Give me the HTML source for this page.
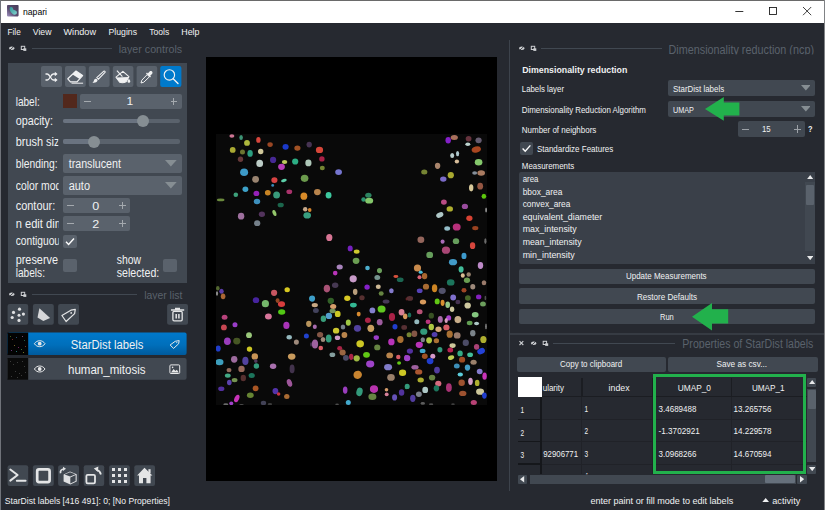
<!DOCTYPE html>
<html><head><meta charset="utf-8"><title>napari</title>
<style>
*{box-sizing:border-box;margin:0;padding:0}
html,body{width:825px;height:510px;overflow:hidden;background:#262930}
body{position:relative;font-family:"Liberation Sans",sans-serif;color:#f0f1f2;font-size:12px}
.a{position:absolute}
.t{position:absolute;white-space:nowrap;transform-origin:0 50%;display:block}
</style></head><body>
<div class="a" style="left:0px;top:0px;width:825px;height:23px;background:#ffffff;"></div>
<div class="a" style="left:0px;top:0px;width:825px;height:1px;background:#6a6a6a;"></div>
<div class="a" style="left:0px;top:0px;width:1px;height:510px;background:#70737a;"></div>
<svg class="a" style="left:7px;top:5.2px" width="11.6" height="11.4" viewBox="0 0 11.6 11.4"><defs><linearGradient id="icg" x1="1" y1="0" x2="0" y2="1"><stop offset="0" stop-color="#463b58"/><stop offset="0.6" stop-color="#5a4d70"/><stop offset="1" stop-color="#a294c4"/></linearGradient><linearGradient id="icb" x1="0" y1="0" x2="1" y2="1"><stop offset="0" stop-color="#2f9696"/><stop offset="1" stop-color="#86d2d0"/></linearGradient></defs><rect width="11.600" height="11.400" rx="0.800" fill="url(#icg)"/><path d="M3.700 2.100c1.300-.3 2.200.6 2.300 1.700.1 1 .9 1.300 1.900 1.500 1.400.3 2.300 1.500 2 2.800-.4 1.500-2.100 2-3.500 1.300C5 8.700 4.200 7.600 3.300 6.200 2.300 4.700 2.300 2.500 3.700 2.100z" fill="url(#icb)"/></svg>
<svg class="a" style="left:730px;top:0px" width="95" height="23" viewBox="0 0 95 23"><g stroke="#111" stroke-width="0.850" fill="none"><path d="M5.300 11.500h8"/><rect x="39.500" y="7.500" width="7" height="7"/><path d="M73 7l8.200 8.200M81.200 7l-8.200 8.200" stroke-width="0.800"/></g></svg>
<svg class="a" style="left:8.9px;top:45px" width="18" height="7" viewBox="0 0 18 7"><ellipse cx="2.8" cy="3.300" rx="2.800" ry="1.700" fill="#cdcfd2"/><path d="M0.6 5.300l4.400-4" stroke="#262930" stroke-width="0.800"/><rect x="12.3" y="1.300" width="3.400" height="3.200" fill="none" stroke="#cdcfd2" stroke-width="1"/><rect x="14.3" y="3.300" width="3" height="2.600" fill="#cdcfd2"/></svg>
<div class="a" style="left:31.5px;top:48px;width:80px;height:1px;background:#414851;"></div>
<div class="a" style="left:8px;top:63px;width:179px;height:219.5px;background:#414851;"></div>
<svg class="a" style="left:38px;top:62px" width="148" height="29" viewBox="38 62 148 29">
<g fill="#5a626c"><rect x="41" y="66" width="21" height="21" rx="2"/><rect x="65" y="66" width="20.800" height="21" rx="2"/><rect x="88.800" y="66" width="20.800" height="21" rx="2"/><rect x="112.800" y="66" width="20.600" height="21" rx="2"/><rect x="136.600" y="66" width="20.600" height="21" rx="2"/></g>
<rect x="160.200" y="66" width="21.200" height="21" rx="2" fill="#007acc"/>
<!-- shuffle -->
<g stroke="#f0f1f2" stroke-width="1.300" fill="none"><path d="M45.500 74h1.800c2.600 0 3.400 6 6 6h2"/><path d="M45.500 80h1.800c2.600 0 3.400-6 6-6h2"/></g>
<path d="M54.800 71.800l2.800 2.200-2.800 2.200zM54.800 77.800l2.800 2.200-2.800 2.200z" fill="#f0f1f2"/>
<!-- eraser -->
<path d="M67.800 78.800l8.200-7.800 6.600 4.600-5.600 6.200h-6.600z" fill="none" stroke="#f0f1f2" stroke-width="1.200" stroke-linejoin="round"/>
<path d="M76 71l6.600 4.600-3 3.400-7-4.600z" fill="#f0f1f2"/>
<path d="M71.500 83.200h11.600" stroke="#f0f1f2" stroke-width="1"/>
<!-- brush -->
<path d="M96.800 77.600l7-6.400c.8-.6 1.800.4 1.200 1.200l-6.600 6.800z" fill="none" stroke="#f0f1f2" stroke-width="1.100"/>
<path d="M92.400 83c1.200-.6 1.200-2 1.800-3.200.8-1.400 2.600-1.200 3.200 0 .6 1.400-.6 3-5 3.200z" fill="#f0f1f2"/>
<!-- bucket -->
<path d="M116 77.200L122.900 71.300L128.900 76.700L126.100 81.800Q123 83.300 119.700 82.300z" fill="none" stroke="#f0f1f2" stroke-width="1.100" stroke-linejoin="round"/>
<path d="M116 77.600L128.900 76.900L126.100 81.800Q123 83.300 119.700 82.300z" fill="#f0f1f2"/>
<path d="M116.900 70.700L122.400 76.700" stroke="#f0f1f2" stroke-width="1.100" fill="none"/>
<path d="M128.900 78.800c.8 1.200 1.400 1.900 1.400 2.600a1.400 1.400 0 0 1-2.800 0c0-.7.600-1.400 1.400-2.600z" fill="#f0f1f2"/>
<!-- dropper -->
<path d="M141 83l.8-2.800 5.400-5.600 2.200 2.200-5.600 5.400z" fill="none" stroke="#f0f1f2" stroke-width="1" stroke-linejoin="round"/>
<path d="M146 73.600l1-1 .8.800 1.800-1.800c1.600-1.600 4 .8 2.400 2.400l-1.800 1.800.8.800-1 1z" fill="#f0f1f2"/>
<!-- magnifier -->
<circle cx="169.400" cy="74.900" r="5.200" fill="none" stroke="#f0f1f2" stroke-width="1.150"/>
<path d="M173.200 78.800l4.800 4.800" stroke="#f0f1f2" stroke-width="1.400" stroke-linecap="round"/>
</svg>

<div class="a" style="left:62.7px;top:94px;width:14.3px;height:14.3px;background:#52281c;"></div>
<div class="a" style="left:80px;top:94px;width:101.5px;height:14.5px;background:#5a626c;border-radius:2px;"></div>
<div class="a" style="left:84px;top:100.75px;width:6.5px;height:1px;background:#a4a9ae;"></div>
<div class="a" style="left:170.5px;top:100.75px;width:6.5px;height:1px;background:#a4a9ae;"></div>
<div class="a" style="left:173.25px;top:97.75px;width:1px;height:7px;background:#a4a9ae;"></div>
<div class="a" style="left:63.3px;top:118.5px;width:117.1px;height:4.4px;background:#5a626c;border-radius:2px;"></div>
<div class="a" style="left:63.3px;top:118.5px;width:79.9px;height:4.4px;background:#6a7380;border-radius:2px;"></div>
<div class="a" style="left:137.2px;top:114.7px;width:12px;height:12px;background:#868e93;border-radius:6px;"></div>
<div class="a" style="left:63.3px;top:139.3px;width:117.1px;height:4.4px;background:#5a626c;border-radius:2px;"></div>
<div class="a" style="left:63.3px;top:139.3px;width:30.7px;height:4.4px;background:#6a7380;border-radius:2px;"></div>
<div class="a" style="left:88px;top:135.5px;width:12px;height:12px;background:#868e93;border-radius:6px;"></div>
<div class="a" style="left:63px;top:153.7px;width:118.5px;height:19.3px;background:#5a626c;border-radius:2px;"></div>
<svg class="a" style="left:165.45px;top:160.15px" width="11.7" height="6.4" viewBox="0 0 11.7 6.4"><path d="M0 0h11.7 l-5.85 6.4 z" fill="#868e93"/></svg>
<div class="a" style="left:63px;top:176.3px;width:118.5px;height:18.7px;background:#5a626c;border-radius:2px;"></div>
<svg class="a" style="left:165.45px;top:182.45px" width="11.7" height="6.4" viewBox="0 0 11.7 6.4"><path d="M0 0h11.7 l-5.85 6.4 z" fill="#868e93"/></svg>
<div class="a" style="left:63px;top:198.4px;width:67px;height:14.3px;background:#5a626c;border-radius:2px;"></div>
<div class="a" style="left:67px;top:205.05px;width:6.5px;height:1px;background:#a4a9ae;"></div>
<div class="a" style="left:119px;top:205.05px;width:6.5px;height:1px;background:#a4a9ae;"></div>
<div class="a" style="left:121.75px;top:202.05px;width:1px;height:7px;background:#a4a9ae;"></div>
<div class="a" style="left:63px;top:216.3px;width:67px;height:14.4px;background:#5a626c;border-radius:2px;"></div>
<div class="a" style="left:67px;top:223px;width:6.5px;height:1px;background:#a4a9ae;"></div>
<div class="a" style="left:119px;top:223px;width:6.5px;height:1px;background:#a4a9ae;"></div>
<div class="a" style="left:121.75px;top:220px;width:1px;height:7px;background:#a4a9ae;"></div>
<div class="a" style="left:63.3px;top:235px;width:13.7px;height:13.3px;background:#5a626c;border-radius:2px;"><svg width="14" height="13" viewBox="0 0 14 13" style="position:absolute;left:0;top:0"><path d="M3 6.800l2.600 2.600 5.400-5.800" stroke="#fff" stroke-width="1.400" fill="none"/></svg></div>
<div class="a" style="left:63.3px;top:259px;width:13.7px;height:13px;background:#5a626c;border-radius:2px;"></div>
<div class="a" style="left:163px;top:259px;width:14px;height:13px;background:#5a626c;border-radius:2px;"></div>
<svg class="a" style="left:8.9px;top:291px" width="18" height="7" viewBox="0 0 18 7"><ellipse cx="2.8" cy="3.300" rx="2.800" ry="1.700" fill="#cdcfd2"/><path d="M0.6 5.300l4.400-4" stroke="#262930" stroke-width="0.800"/><rect x="12.3" y="1.300" width="3.400" height="3.200" fill="none" stroke="#cdcfd2" stroke-width="1"/><rect x="14.3" y="3.300" width="3" height="2.600" fill="#cdcfd2"/></svg>
<div class="a" style="left:31.5px;top:293.7px;width:105.5px;height:1px;background:#414851;"></div>
<svg class="a" style="left:4px;top:300px" width="190" height="190" viewBox="4 300 190 190">
<defs><linearGradient id="selg" x1="0" y1="0" x2="0" y2="1"><stop offset="0" stop-color="#0079cb"/><stop offset="0.55" stop-color="#006fbb"/><stop offset="1" stop-color="#005a9c"/></linearGradient></defs>
<g fill="#414851"><rect x="7.600" y="304.100" width="20.600" height="20.700" rx="2"/><rect x="32.900" y="304.100" width="20.900" height="20.700" rx="2"/><rect x="58.100" y="304.100" width="20.900" height="20.700" rx="2"/><rect x="167.100" y="304.100" width="20.900" height="20.700" rx="2"/></g>
<!-- points -->
<g fill="#dfe0e2"><circle cx="19.500" cy="309.200" r="1.600"/><circle cx="13.500" cy="312.400" r="1.600"/><circle cx="23.400" cy="314.100" r="1.600"/><circle cx="19" cy="315.200" r="1.500"/><circle cx="12.200" cy="317.500" r="1.600"/><circle cx="19" cy="320.400" r="1.600"/></g>
<!-- shapes -->
<path d="M39.400 308.200L50.100 317.900L43.300 320.900L37.500 317.500z" fill="#d6d7d9"/>
<!-- tag -->
<path d="M61.900 315.500L70.900 310.200L75.300 309.400L74.600 313.600L66.100 321.500z" fill="none" stroke="#e4e5e6" stroke-width="1.200" stroke-linejoin="round"/><circle cx="71.200" cy="312.900" r="0.900" fill="#e4e5e6"/>
<!-- trash -->
<path d="M171 310h13.200M175 308.400h5" stroke="#e4e5e6" stroke-width="1.500" fill="none"/>
<rect x="172.900" y="311.400" width="9.300" height="9.400" rx="1.200" fill="none" stroke="#e4e5e6" stroke-width="1.300"/>
<path d="M176.200 314v4.400M178.900 314v4.400" stroke="#e4e5e6" stroke-width="1.500"/>
<!-- rows -->
<rect x="7.500" y="332.600" width="179.100" height="22.400" rx="2" fill="url(#selg)"/>
<rect x="7.500" y="358" width="179.100" height="21.800" rx="2" fill="#414851"/>
<rect x="7.500" y="332.600" width="20.700" height="22.400" fill="#030303"/>
<rect x="7.500" y="358" width="20.700" height="21.800" fill="#0a0a0a"/>
<g opacity="0.55"><rect x="10" y="336" width="1" height="1" fill="#7a3"/><rect x="12" y="339" width="1" height="1" fill="#c44"/><rect x="16" y="337" width="1" height="1" fill="#48c"/><rect x="22" y="336" width="1" height="1" fill="#c8c"/><rect x="24" y="340" width="1" height="1" fill="#4a8"/><rect x="14" y="345" width="1" height="1" fill="#ca4"/><rect x="18" y="347" width="1" height="1" fill="#c4a"/><rect x="21" y="349" width="1" height="1" fill="#6c6"/><rect x="11" y="350" width="1" height="1" fill="#a6c"/><rect x="25" y="346" width="1" height="1" fill="#c64"/><rect x="16" y="351" width="1" height="1" fill="#4cc"/><rect x="23" y="352" width="1" height="1" fill="#cc4"/></g>
<g fill="#3a3a3a"><rect x="10" y="361" width="1" height="1"/><rect x="13" y="364" width="1" height="1"/><rect x="17" y="362" width="1" height="1"/><rect x="22" y="361" width="1" height="1"/><rect x="24" y="366" width="1" height="1"/><rect x="15" y="371" width="1" height="1"/><rect x="19" y="373" width="1" height="1"/><rect x="21" y="375" width="1" height="1"/><rect x="11" y="376" width="1" height="1"/><rect x="25" y="372" width="1" height="1"/><rect x="17" y="377" width="1" height="1"/></g>
<!-- eyes -->
<g fill="none" stroke="#e8e9ea" stroke-width="1"><path d="M34.400 343.700c2.600-4 8-4 10.600 0-2.600 4-8 4-10.600 0z"/><path d="M34.400 369c2.600-4 8-4 10.600 0-2.600 4-8 4-10.600 0z"/></g>
<circle cx="39.700" cy="343.700" r="1.900" fill="#e8e9ea"/><circle cx="39.700" cy="369" r="1.900" fill="#e8e9ea"/>
<!-- row tag icon -->
<path d="M170.100 345L175.200 341.300L179.200 340.600L178.600 343.800L173.600 348.400z" fill="none" stroke="#e8e9ea" stroke-width="1" stroke-linejoin="round"/><circle cx="176.800" cy="342.600" r="0.600" fill="#e8e9ea"/>
<!-- row image icon -->
<rect x="169.900" y="364.900" width="9.800" height="8.600" rx="1" fill="none" stroke="#e8e9ea" stroke-width="1"/><path d="M171 372.500l2.600-3.400 1.800 1.800 1.400-1.200 2 2.800z" fill="#e8e9ea"/><circle cx="172.600" cy="367.400" r="0.800" fill="#e8e9ea"/>
<!-- viewer buttons -->
<g fill="#414851"><rect x="7.600" y="465.300" width="20.600" height="20.700" rx="2"/><rect x="32.900" y="465.300" width="20.900" height="20.700" rx="2"/><rect x="58.100" y="465.300" width="20.900" height="20.700" rx="2"/><rect x="83.700" y="465.300" width="20.500" height="20.700" rx="2"/><rect x="109.100" y="465.300" width="20.700" height="20.700" rx="2"/><rect x="134.300" y="465.300" width="20.700" height="20.700" rx="2"/></g>
<!-- console -->
<path d="M10.300 469.500L17.600 475L10.300 480.600" fill="none" stroke="#e4e5e6" stroke-width="2" stroke-linecap="round" stroke-linejoin="round"/><path d="M16.800 480.700h8.800" stroke="#e4e5e6" stroke-width="1.900" stroke-linecap="round"/>
<!-- 2D square -->
<rect x="37.200" y="469.400" width="12.400" height="12.700" rx="1.800" fill="none" stroke="#e4e5e6" stroke-width="2.700"/>
<!-- cube + arrow -->
<path d="M63.600 474.600L70 471.400L76.700 474.200L76.700 481.600L70.300 484.600L63.600 481.600z" fill="#dfe0e2"/>
<path d="M70.300 477.400L75.600 475v6l-5.300 2.500z" fill="#414851"/>
<path d="M64.600 474.400L70 472.300L75.400 474.300L70.200 476.600z" fill="#414851"/>
<path d="M60.600 473.200c-.6-2.200.6-3.800 2.800-4.200" fill="none" stroke="#dfe0e2" stroke-width="1.700"/><path d="M63 466.800l3 2-3 2.200z" fill="#dfe0e2"/>
<!-- roll -->
<rect x="86.400" y="474.800" width="8.600" height="8.500" rx="1.300" fill="none" stroke="#e4e5e6" stroke-width="1.800"/>
<path d="M100.900 474.500c-.6-2.600-2-4-4.400-4.600" fill="none" stroke="#e4e5e6" stroke-width="1.800"/><path d="M93.800 468.600l4.600-2-.6 5.200z" fill="#e4e5e6"/>
<!-- grid -->
<g fill="#e4e5e6"><rect x="112" y="468" width="3" height="3"/><rect x="118" y="468" width="3" height="3"/><rect x="124" y="468" width="3" height="3"/><rect x="112" y="474" width="3" height="3"/><rect x="118" y="474" width="3" height="3"/><rect x="124" y="474" width="3" height="3"/><rect x="112" y="480" width="3" height="3"/><rect x="118" y="480" width="3" height="3"/><rect x="124" y="480" width="3" height="3"/></g>
<!-- home -->
<path d="M144.500 467.800L152.400 475.600H150.600V483.300H146.400V478H143V483.300H139V475.600H137.100z" fill="#e4e5e6"/><rect x="148.400" y="469.200" width="2.200" height="4" fill="#e4e5e6"/>
</svg>

<svg class="a" style="left:762px;top:498px" width="7.4" height="4.4" viewBox="0 0 7.4 4.4"><path d="M0 4.400L3.700 0L7.400 4.400z" fill="#f0f1f2"/></svg>
<div class="a" style="left:206px;top:56.8px;width:291.2px;height:424.4px;background:#000;"></div>
<div class="a" style="left:216.3px;top:133.5px;width:270.7px;height:271.2px;background:#090909;"></div>
<svg class="a" style="left:216.3px;top:133.5px" width="270.7" height="271.2" viewBox="0 0 270.7 271.2"><defs><filter id="bf" x="-5%" y="-5%" width="110%" height="110%"><feGaussianBlur stdDeviation="0.45"/></filter></defs><g filter="url(#bf)" opacity="0.96"><ellipse cx="15.9" cy="2" rx="2.5" ry="1.8" fill="#d67a9a"/><ellipse cx="25.1" cy="3.4" rx="1.8" ry="2.5" fill="#3f9a7a"/><ellipse cx="31" cy="8.9" rx="2.9" ry="2.9" fill="#b5c040"/><ellipse cx="42.4" cy="5.9" rx="2.2" ry="2.9" fill="#e04a40"/><ellipse cx="54.1" cy="10.6" rx="2.7" ry="2.3" fill="#a04a25"/><ellipse cx="69.6" cy="12.8" rx="3.1" ry="2.9" fill="#1a3ad0"/><ellipse cx="81.4" cy="14.1" rx="3.1" ry="2.7" fill="#a85528"/><ellipse cx="93.2" cy="10.6" rx="2.7" ry="2.9" fill="#4a3555"/><ellipse cx="16.7" cy="15.9" rx="2.9" ry="2.9" fill="#b0b035"/><ellipse cx="26.5" cy="18.1" rx="2.5" ry="2.5" fill="#6f7a30"/><ellipse cx="34.1" cy="19.4" rx="2.7" ry="3.4" fill="#2fa585"/><ellipse cx="44.7" cy="17.5" rx="2.7" ry="2.7" fill="#d8cfa0"/><ellipse cx="24.5" cy="25.3" rx="2.7" ry="2.7" fill="#6a3a3a"/><ellipse cx="57.1" cy="25.9" rx="3.1" ry="3.1" fill="#4a2a9a"/><ellipse cx="43.7" cy="29.4" rx="3.4" ry="3.6" fill="#c5d5cf"/><ellipse cx="68.6" cy="27.9" rx="2.7" ry="2" fill="#c5d060"/><ellipse cx="65.5" cy="32.8" rx="3.4" ry="3.1" fill="#c040c0"/><ellipse cx="79.2" cy="27.5" rx="3.1" ry="3.1" fill="#2fb58a"/><ellipse cx="92.4" cy="28.9" rx="3.1" ry="3.4" fill="#b5cfc0"/><ellipse cx="28.1" cy="38.3" rx="4" ry="3.8" fill="#40a0d0"/><ellipse cx="39.6" cy="45.3" rx="3.4" ry="3.4" fill="#a08a75"/><ellipse cx="58.4" cy="46.1" rx="3.1" ry="2.9" fill="#e04545"/><ellipse cx="67.9" cy="46.5" rx="2.9" ry="1.6" fill="#60d8b0" transform="rotate(-15 67.9 46.5)"/><ellipse cx="56.7" cy="51.4" rx="1.4" ry="1.4" fill="#3a90c0"/><ellipse cx="88.6" cy="44.3" rx="3.8" ry="3.6" fill="#6fa050"/><ellipse cx="29.4" cy="55.3" rx="2.9" ry="2.7" fill="#40a8d0"/><ellipse cx="19.8" cy="60.8" rx="2.3" ry="2.3" fill="#3fa880"/><ellipse cx="40.4" cy="59.4" rx="2.9" ry="2.7" fill="#9a20c0"/><ellipse cx="51.8" cy="58.7" rx="2.9" ry="2.7" fill="#d08a25"/><ellipse cx="60.6" cy="61" rx="3.4" ry="3.6" fill="#3aa080"/><ellipse cx="73.3" cy="57.7" rx="2.9" ry="2.3" fill="#b03570"/><ellipse cx="87.9" cy="62.2" rx="3.4" ry="3.6" fill="#e0902a"/><ellipse cx="4.7" cy="65.9" rx="3.8" ry="1.3" fill="#6f9040"/><ellipse cx="41" cy="67.5" rx="3.2" ry="2.7" fill="#4095c5"/><ellipse cx="64.7" cy="71" rx="3.1" ry="2.3" fill="#1f6a50"/><ellipse cx="89.2" cy="75.3" rx="2.2" ry="2.2" fill="#d0b090"/><ellipse cx="93.7" cy="75.9" rx="1.8" ry="2" fill="#e08a30"/><ellipse cx="91.2" cy="81.4" rx="3.8" ry="3.1" fill="#3aa585"/><ellipse cx="25.1" cy="82.2" rx="3.2" ry="3.4" fill="#a575a5"/><ellipse cx="45.9" cy="80.2" rx="3.1" ry="2.7" fill="#553560"/><ellipse cx="58.4" cy="79" rx="1.8" ry="3.2" fill="#9acf70" transform="rotate(-20 58.4 79)"/><ellipse cx="41.2" cy="89.2" rx="3.1" ry="2.9" fill="#7a8590"/><ellipse cx="103.5" cy="15.9" rx="3.6" ry="3.2" fill="#e04a3a"/><ellipse cx="105.9" cy="24.9" rx="2.7" ry="2.7" fill="#b0204a"/><ellipse cx="106.3" cy="34" rx="2.5" ry="2.3" fill="#7a8a35"/><ellipse cx="122.6" cy="38.1" rx="3.4" ry="2.9" fill="#7a7ad8"/><ellipse cx="101.4" cy="58.1" rx="3.4" ry="3.1" fill="#c08a50"/><ellipse cx="112.6" cy="61.2" rx="2.9" ry="3.2" fill="#40d0a5"/><ellipse cx="152.4" cy="61.2" rx="3.2" ry="2.5" fill="#2f8a65"/><ellipse cx="147.5" cy="65.5" rx="2.2" ry="2.3" fill="#2f9a75"/><ellipse cx="153.2" cy="66.7" rx="4" ry="2.9" fill="#8acf70"/><ellipse cx="238.3" cy="3.4" rx="3.6" ry="2.5" fill="#b07560"/><ellipse cx="232.2" cy="6.3" rx="2.7" ry="3.2" fill="#8a20d0"/><ellipse cx="252.6" cy="4.7" rx="2.9" ry="2.7" fill="#6a3540"/><ellipse cx="262.6" cy="6.3" rx="3.1" ry="2.9" fill="#6a6075"/><ellipse cx="251.8" cy="10.2" rx="2.5" ry="1.8" fill="#c5dcd8"/><ellipse cx="260.3" cy="15.5" rx="4.7" ry="3.1" fill="#b04a20" transform="rotate(-15 260.3 15.5)"/><ellipse cx="236.2" cy="21.6" rx="2" ry="2.5" fill="#c0d5d5"/><ellipse cx="241.6" cy="19.6" rx="1.6" ry="2.7" fill="#b5d0d5"/><ellipse cx="240.9" cy="27.5" rx="2.2" ry="2" fill="#e0c5a0"/><ellipse cx="262.6" cy="28.3" rx="3.8" ry="3.2" fill="#8ad070"/><ellipse cx="221.6" cy="31.8" rx="2.7" ry="3.1" fill="#b08a70"/><ellipse cx="208.3" cy="38.1" rx="3.1" ry="2.5" fill="#7a8a35"/><ellipse cx="234.8" cy="41.2" rx="3.1" ry="3.1" fill="#b0b030"/><ellipse cx="227.3" cy="45.1" rx="3.2" ry="2.7" fill="#8070d0"/><ellipse cx="258.7" cy="39" rx="2.5" ry="1.8" fill="#8a95a0"/><ellipse cx="265.2" cy="39" rx="3.8" ry="2.7" fill="#b08065"/><ellipse cx="264.2" cy="52.2" rx="2.9" ry="3.4" fill="#9a5a45"/><ellipse cx="255.2" cy="53.8" rx="2.2" ry="3.6" fill="#e0d0a0"/><ellipse cx="267.9" cy="62.2" rx="2.3" ry="2.5" fill="#60d010"/><ellipse cx="227.9" cy="68.1" rx="2.9" ry="2.7" fill="#c0508a"/><ellipse cx="233.8" cy="74.9" rx="3.2" ry="2.7" fill="#b5b530"/><ellipse cx="248.9" cy="72.4" rx="3.1" ry="2.7" fill="#a050a5"/><ellipse cx="223.8" cy="81" rx="3.8" ry="2.5" fill="#b5cfcf" transform="rotate(-25 223.8 81)"/><ellipse cx="253.4" cy="84.3" rx="3.1" ry="2.7" fill="#e04535"/><ellipse cx="240.7" cy="93" rx="4" ry="3.6" fill="#c03080"/><ellipse cx="231.2" cy="94.5" rx="2.9" ry="2.2" fill="#9ac5d0"/><ellipse cx="259.3" cy="94.1" rx="3.1" ry="2.2" fill="#a04520"/><ellipse cx="270.1" cy="75.9" rx="0.9" ry="2.5" fill="#9a9a9a"/><ellipse cx="1.8" cy="154.2" rx="1.8" ry="2.2" fill="#556a30"/><ellipse cx="5.5" cy="157.2" rx="2.2" ry="2.5" fill="#6040b0"/><ellipse cx="1" cy="159.5" rx="1.1" ry="2.2" fill="#909090"/><ellipse cx="7.1" cy="162.3" rx="2.3" ry="2.9" fill="#b06a35"/><ellipse cx="58.1" cy="158.8" rx="3.1" ry="3.1" fill="#d05a65"/><ellipse cx="71.2" cy="155.8" rx="2.7" ry="2.5" fill="#e0d020"/><ellipse cx="40" cy="166.2" rx="3.2" ry="2.9" fill="#4a25a5"/><ellipse cx="49.4" cy="169.7" rx="3.6" ry="3.6" fill="#7abf70"/><ellipse cx="61.6" cy="166.6" rx="2" ry="2.3" fill="#9a4a25"/><ellipse cx="65.5" cy="170.1" rx="3.6" ry="2.9" fill="#e04040"/><ellipse cx="65.7" cy="178" rx="3.6" ry="2.7" fill="#55d015"/><ellipse cx="52.4" cy="182.5" rx="3.4" ry="2.9" fill="#e07aa0"/><ellipse cx="8.6" cy="183.3" rx="2.9" ry="2.5" fill="#c04580"/><ellipse cx="94.7" cy="164.6" rx="1.4" ry="2.5" fill="#40b0d0"/><ellipse cx="113.3" cy="103.5" rx="3.1" ry="3.6" fill="#e07a9a"/><ellipse cx="134.2" cy="114.4" rx="2.5" ry="2.9" fill="#7a20c5"/><ellipse cx="140.7" cy="117.6" rx="2.9" ry="2.2" fill="#d5cf30"/><ellipse cx="140.1" cy="126.8" rx="3.4" ry="3.1" fill="#6fa555"/><ellipse cx="123.7" cy="132.9" rx="3.1" ry="2.5" fill="#b08ac5"/><ellipse cx="151.5" cy="134" rx="2.3" ry="2.2" fill="#50b5d5"/><ellipse cx="119.2" cy="139.1" rx="2.3" ry="2.3" fill="#c035c0"/><ellipse cx="163.5" cy="136.6" rx="2.5" ry="2.7" fill="#6fa560"/><ellipse cx="161.3" cy="143.5" rx="2.9" ry="2.5" fill="#7a9a95"/><ellipse cx="137.2" cy="144.8" rx="3.6" ry="3.6" fill="#d0a0d0"/><ellipse cx="179.9" cy="142.5" rx="2.5" ry="1.4" fill="#e05540"/><ellipse cx="184.2" cy="145.8" rx="3.4" ry="2.3" fill="#1f6a55"/><ellipse cx="151.1" cy="153.1" rx="2.7" ry="2.7" fill="#8a20d0"/><ellipse cx="162.3" cy="152.7" rx="2.5" ry="2.2" fill="#d5c09a"/><ellipse cx="110.9" cy="154.6" rx="3.2" ry="3.8" fill="#b0557a"/><ellipse cx="119.2" cy="151.3" rx="3.2" ry="2.7" fill="#4a3a55"/><ellipse cx="175.4" cy="156.8" rx="2.3" ry="2.5" fill="#8a80d5"/><ellipse cx="139.2" cy="157.8" rx="2.3" ry="3.1" fill="#c0a580"/><ellipse cx="165.2" cy="159.5" rx="2.5" ry="2.3" fill="#6a8a45"/><ellipse cx="96.2" cy="164.6" rx="2.9" ry="3.1" fill="#40a5d0"/><ellipse cx="131.3" cy="164.2" rx="3.1" ry="2.7" fill="#e0d025"/><ellipse cx="146" cy="163.7" rx="2.7" ry="2.5" fill="#5a3030"/><ellipse cx="114.8" cy="166.8" rx="3.2" ry="3.1" fill="#35652a"/><ellipse cx="170.1" cy="167.4" rx="3.4" ry="2" fill="#4a3a5a"/><ellipse cx="98.8" cy="171.1" rx="3.1" ry="2.2" fill="#d0b08a"/><ellipse cx="137.4" cy="171.1" rx="3.4" ry="2.3" fill="#35c09a"/><ellipse cx="117.2" cy="172.5" rx="3.1" ry="2.5" fill="#e0a570"/><ellipse cx="99.9" cy="176.6" rx="2.9" ry="2.5" fill="#454560"/><ellipse cx="116.6" cy="177" rx="3.1" ry="2.2" fill="#7a9a60"/><ellipse cx="165.6" cy="175" rx="4" ry="3.6" fill="#65cf20"/><ellipse cx="156.4" cy="176.4" rx="2.9" ry="2.9" fill="#8a85d5"/><ellipse cx="121.7" cy="179.9" rx="2.9" ry="3.2" fill="#d5d025"/><ellipse cx="112.9" cy="181.9" rx="3.2" ry="3.1" fill="#55a5d5"/><ellipse cx="142.7" cy="180.1" rx="2" ry="2.3" fill="#e09030"/><ellipse cx="185.6" cy="178.2" rx="2.9" ry="3.2" fill="#e0859a"/><ellipse cx="107.4" cy="184.8" rx="2.7" ry="3.2" fill="#3aa580"/><ellipse cx="176" cy="183.1" rx="3.1" ry="4" fill="#b0204a"/><ellipse cx="189.2" cy="182.3" rx="2.2" ry="2.9" fill="#e0a060"/><ellipse cx="151.9" cy="186.2" rx="2.9" ry="2.7" fill="#b0254a"/><ellipse cx="132.3" cy="188.6" rx="2.5" ry="3.2" fill="#a5d045"/><ellipse cx="163.7" cy="188.2" rx="2.9" ry="3.1" fill="#a560a5"/><ellipse cx="190.7" cy="165" rx="1.1" ry="1.4" fill="#6a2525"/><ellipse cx="204.9" cy="105.8" rx="3.4" ry="3.2" fill="#9a6a60"/><ellipse cx="226.6" cy="107.6" rx="2" ry="2.2" fill="#b070c0"/><ellipse cx="240" cy="107.2" rx="3.2" ry="2.9" fill="#6aa560"/><ellipse cx="256.6" cy="111.7" rx="2.7" ry="3.4" fill="#e04a40"/><ellipse cx="269.4" cy="107.2" rx="1.1" ry="2.9" fill="#707070"/><ellipse cx="230" cy="116.2" rx="4.1" ry="3.6" fill="#b04a7a"/><ellipse cx="213.7" cy="120.9" rx="3.4" ry="3.2" fill="#6aa560"/><ellipse cx="248" cy="121.9" rx="2.5" ry="3.2" fill="#40a0d5"/><ellipse cx="237" cy="128.2" rx="4.1" ry="3.1" fill="#45a0cf"/><ellipse cx="264.5" cy="131.5" rx="2.7" ry="3.4" fill="#c590d0"/><ellipse cx="201.5" cy="134" rx="3.6" ry="3.6" fill="#d09050"/><ellipse cx="245.1" cy="135.4" rx="2.5" ry="3.1" fill="#45c5a0"/><ellipse cx="204.7" cy="138.2" rx="2" ry="1.6" fill="#50c5e0"/><ellipse cx="252.7" cy="140.5" rx="2.2" ry="2.2" fill="#9a8570"/><ellipse cx="246.8" cy="141.5" rx="2" ry="2.2" fill="#e0c59a"/><ellipse cx="208.6" cy="142.1" rx="2.7" ry="3.2" fill="#b06a30"/><ellipse cx="203.5" cy="143.3" rx="2" ry="2" fill="#e0657a"/><ellipse cx="251" cy="146.2" rx="3.1" ry="2.7" fill="#70a555"/><ellipse cx="234.7" cy="148.4" rx="3.8" ry="3.2" fill="#1f7a60"/><ellipse cx="268" cy="148.8" rx="2.3" ry="2.5" fill="#a08070"/><ellipse cx="210" cy="152.7" rx="3.1" ry="2.9" fill="#b07035"/><ellipse cx="218.6" cy="154.2" rx="2.7" ry="4" fill="#d58a25"/><ellipse cx="256.8" cy="152.7" rx="2.5" ry="2.7" fill="#a59080"/><ellipse cx="203.7" cy="156.8" rx="2.9" ry="2.3" fill="#5a45c0"/><ellipse cx="226.2" cy="156.8" rx="3.6" ry="3.1" fill="#555570"/><ellipse cx="248" cy="156.2" rx="2.5" ry="2.2" fill="#a54a25"/><ellipse cx="193.9" cy="164.4" rx="3.2" ry="2.3" fill="#5a3035"/><ellipse cx="237.2" cy="163.5" rx="2.9" ry="2.9" fill="#8575d5"/><ellipse cx="251.9" cy="164" rx="2.9" ry="2.7" fill="#4a6a2a"/><ellipse cx="262.7" cy="162.9" rx="2.7" ry="2.3" fill="#8a20c5"/><ellipse cx="207" cy="168" rx="3.2" ry="2.5" fill="#e0a060"/><ellipse cx="221.2" cy="167.4" rx="2.5" ry="2.9" fill="#65d015"/><ellipse cx="226.6" cy="168.8" rx="2" ry="3.1" fill="#e09530"/><ellipse cx="241.9" cy="168" rx="2.5" ry="2.3" fill="#4a3555"/><ellipse cx="231.7" cy="170.7" rx="2.3" ry="3.2" fill="#9ad08a"/><ellipse cx="251.7" cy="171.5" rx="3.2" ry="3.1" fill="#d5d0a5"/><ellipse cx="267" cy="169.9" rx="2.9" ry="2.5" fill="#70a560"/><ellipse cx="236.1" cy="175.2" rx="2.2" ry="2.7" fill="#d5cfa5"/><ellipse cx="203.7" cy="177.8" rx="2.9" ry="2.5" fill="#c0557a"/><ellipse cx="193.5" cy="181.1" rx="1.8" ry="2.5" fill="#1f7560"/><ellipse cx="215.3" cy="181.7" rx="2.7" ry="2.9" fill="#3a5525"/><ellipse cx="259.2" cy="180.7" rx="3.4" ry="2.7" fill="#8acf85"/><ellipse cx="232.7" cy="183.9" rx="2.5" ry="2.7" fill="#b045d5"/><ellipse cx="224.3" cy="185.4" rx="2.5" ry="3.4" fill="#b070b0"/><ellipse cx="241.9" cy="185.6" rx="3.4" ry="3.6" fill="#d0b590"/><ellipse cx="200.8" cy="187.8" rx="2.5" ry="2.5" fill="#9ac0c5"/><ellipse cx="212.1" cy="187.8" rx="2.5" ry="2.2" fill="#c03580"/><ellipse cx="230.2" cy="186.4" rx="1.6" ry="2.5" fill="#e0a5c5"/><ellipse cx="253.7" cy="189" rx="2.9" ry="2.2" fill="#65a555"/><ellipse cx="260.6" cy="189.5" rx="2.5" ry="1.8" fill="#b5d0cf"/><ellipse cx="269.4" cy="164" rx="0.9" ry="2.2" fill="#505050"/><ellipse cx="7.9" cy="193.4" rx="2.9" ry="2.9" fill="#d04a55"/><ellipse cx="19" cy="190.8" rx="2.5" ry="2.5" fill="#a040d0"/><ellipse cx="70.4" cy="191.4" rx="3.1" ry="3.6" fill="#b035c0"/><ellipse cx="92.8" cy="189.8" rx="2.7" ry="3.1" fill="#c09a60"/><ellipse cx="33" cy="201.2" rx="2.9" ry="2.9" fill="#a0d080"/><ellipse cx="11.4" cy="207.3" rx="3.4" ry="3.8" fill="#a040c5"/><ellipse cx="20.8" cy="207.1" rx="3.6" ry="3.4" fill="#4a5a25"/><ellipse cx="73.2" cy="203.2" rx="2.7" ry="2.2" fill="#9ac0c5"/><ellipse cx="90.4" cy="202" rx="2.5" ry="2.5" fill="#2045d5"/><ellipse cx="80.4" cy="208.1" rx="2.5" ry="2.7" fill="#a59080"/><ellipse cx="2.2" cy="214.5" rx="2.5" ry="3.1" fill="#2040d0"/><ellipse cx="33.5" cy="215.1" rx="2.7" ry="2.7" fill="#d5cf25"/><ellipse cx="38.8" cy="222.4" rx="3.2" ry="3.2" fill="#d09a5a"/><ellipse cx="75.7" cy="222.6" rx="3.8" ry="3.1" fill="#d0a060"/><ellipse cx="3.5" cy="228.1" rx="4" ry="3.2" fill="#40a5c5"/><ellipse cx="18.2" cy="225.3" rx="3.2" ry="3.4" fill="#a570a5"/><ellipse cx="29.4" cy="226.9" rx="3.1" ry="4.1" fill="#5545a5"/><ellipse cx="39.8" cy="227.1" rx="1.8" ry="1.8" fill="#553a60"/><ellipse cx="40.4" cy="232" rx="2.7" ry="2.7" fill="#35a080"/><ellipse cx="57.1" cy="232.2" rx="3.2" ry="2.7" fill="#b075b5"/><ellipse cx="25.5" cy="234.9" rx="3.2" ry="3.2" fill="#a07060"/><ellipse cx="13" cy="236.1" rx="2.5" ry="2.2" fill="#9a7060"/><ellipse cx="76.1" cy="234.9" rx="2.5" ry="4.3" fill="#453550"/><ellipse cx="11.8" cy="241.6" rx="2.9" ry="2.2" fill="#45b08a"/><ellipse cx="35.7" cy="241.4" rx="3.1" ry="2.5" fill="#1f7a60"/><ellipse cx="27.3" cy="244" rx="2.7" ry="3.2" fill="#5a3030"/><ellipse cx="18.6" cy="246.1" rx="2.9" ry="2.2" fill="#7a9a55"/><ellipse cx="13.3" cy="248.5" rx="2.3" ry="2.7" fill="#6045b5"/><ellipse cx="73.5" cy="248.9" rx="2.5" ry="4" fill="#a55aa0" transform="rotate(-20 73.5 248.9)"/><ellipse cx="5.3" cy="254.7" rx="3.1" ry="2.3" fill="#5530a5"/><ellipse cx="39.6" cy="254.3" rx="2.9" ry="2.9" fill="#b05a25"/><ellipse cx="59.4" cy="257.1" rx="2.9" ry="3.1" fill="#5535b0"/><ellipse cx="62.6" cy="260" rx="1.8" ry="1.8" fill="#d03545"/><ellipse cx="34.3" cy="261.2" rx="3.4" ry="2.7" fill="#6a8a35"/><ellipse cx="70.8" cy="262.4" rx="2.7" ry="2.5" fill="#b07035"/><ellipse cx="20.8" cy="264.5" rx="2.3" ry="4" fill="#d035c0" transform="rotate(25 20.8 264.5)"/><ellipse cx="15.3" cy="269.4" rx="2" ry="1.8" fill="#a545d0"/><ellipse cx="47.5" cy="269" rx="2.7" ry="2.2" fill="#45455a"/><ellipse cx="9.8" cy="270.4" rx="2.5" ry="1.1" fill="#707070"/><ellipse cx="25.5" cy="270.8" rx="2.2" ry="0.9" fill="#505050"/><ellipse cx="53.9" cy="270.2" rx="2.2" ry="1.1" fill="#404040"/><ellipse cx="95.1" cy="210.4" rx="0.9" ry="2.2" fill="#4a3555"/><ellipse cx="98.8" cy="192.8" rx="2" ry="2.2" fill="#b070b5"/><ellipse cx="127" cy="193" rx="2.3" ry="2.5" fill="#7a8590"/><ellipse cx="179" cy="192.8" rx="2.5" ry="2.7" fill="#2040d5"/><ellipse cx="188.2" cy="193.4" rx="2.9" ry="2.3" fill="#5a3035"/><ellipse cx="120.1" cy="196.7" rx="3.2" ry="2.9" fill="#d5cf30"/><ellipse cx="141.5" cy="194.3" rx="3.6" ry="3.4" fill="#5545a5"/><ellipse cx="154.8" cy="194.3" rx="3.4" ry="3.6" fill="#d0a565"/><ellipse cx="104.1" cy="200.8" rx="3.1" ry="2.7" fill="#8a5a4a"/><ellipse cx="128.4" cy="201" rx="2.9" ry="2.9" fill="#c08a50"/><ellipse cx="112.7" cy="204.5" rx="2.9" ry="4" fill="#35a080"/><ellipse cx="121.5" cy="203.8" rx="2.7" ry="2.3" fill="#d5a0d0"/><ellipse cx="107" cy="205.5" rx="2.3" ry="2.5" fill="#a59080"/><ellipse cx="160.3" cy="203.6" rx="2.7" ry="2.3" fill="#a040d0"/><ellipse cx="184.4" cy="205.5" rx="3.2" ry="3.4" fill="#b07535"/><ellipse cx="99" cy="210" rx="3.1" ry="4.5" fill="#a565a5"/><ellipse cx="175.4" cy="207.9" rx="3.2" ry="3.4" fill="#c035c0"/><ellipse cx="144.2" cy="209.8" rx="3.8" ry="3.6" fill="#d5cf25"/><ellipse cx="104.8" cy="214" rx="2.3" ry="2.2" fill="#e0606a"/><ellipse cx="123.7" cy="214.3" rx="2.5" ry="2.3" fill="#b0254a"/><ellipse cx="161.3" cy="213.4" rx="3.1" ry="2.9" fill="#6a8a45"/><ellipse cx="126.6" cy="218.5" rx="3.1" ry="2.9" fill="#a06a45"/><ellipse cx="116.4" cy="220.8" rx="2.9" ry="2.3" fill="#8aa5a5"/><ellipse cx="150.5" cy="220.8" rx="3.4" ry="2.9" fill="#65d015"/><ellipse cx="173.7" cy="221.4" rx="3.4" ry="2.9" fill="#c08a50"/><ellipse cx="129.9" cy="223.8" rx="2.9" ry="2.9" fill="#50506a"/><ellipse cx="135.2" cy="222.8" rx="2.2" ry="3.1" fill="#b0254a"/><ellipse cx="140.7" cy="224.3" rx="3.1" ry="3.1" fill="#a5c045"/><ellipse cx="182.3" cy="223" rx="2.2" ry="2.2" fill="#e0606a"/><ellipse cx="189.9" cy="223.8" rx="1.6" ry="2.9" fill="#a040d0"/><ellipse cx="154.2" cy="230" rx="4.1" ry="3.4" fill="#a545d0"/><ellipse cx="183.1" cy="229" rx="2" ry="1.8" fill="#65d015"/><ellipse cx="172.1" cy="233.2" rx="4" ry="3.1" fill="#8580d0"/><ellipse cx="186.6" cy="238.7" rx="3.6" ry="3.2" fill="#d5cf25"/><ellipse cx="141.7" cy="240.8" rx="4.3" ry="4.1" fill="#d08a30" transform="rotate(-30 141.7 240.8)"/><ellipse cx="175" cy="243.4" rx="3.8" ry="3.4" fill="#a08570"/><ellipse cx="158" cy="255.1" rx="4.1" ry="3.8" fill="#c035b5"/><ellipse cx="129.2" cy="256.1" rx="2.3" ry="3.6" fill="#a040c5"/><ellipse cx="143.5" cy="257.9" rx="3.1" ry="4.3" fill="#35a080" transform="rotate(15 143.5 257.9)"/><ellipse cx="170.5" cy="255.7" rx="1.8" ry="1.8" fill="#e0a570"/><ellipse cx="170.7" cy="260.4" rx="2" ry="1.8" fill="#e085a0"/><ellipse cx="185.6" cy="258.5" rx="2.7" ry="3.2" fill="#5535a5"/><ellipse cx="156.4" cy="262.8" rx="4" ry="3.2" fill="#6a8a45"/><ellipse cx="178.6" cy="263.4" rx="2.5" ry="3.1" fill="#6a55c0"/><ellipse cx="132.3" cy="268.5" rx="2.5" ry="2.5" fill="#45b0d5"/><ellipse cx="121.1" cy="270.4" rx="1.8" ry="0.9" fill="#505050"/><ellipse cx="190.3" cy="252.8" rx="1.3" ry="2.5" fill="#35a080"/><ellipse cx="215.3" cy="193" rx="2.7" ry="3.2" fill="#b5cf45"/><ellipse cx="230.4" cy="193.4" rx="3.1" ry="2.9" fill="#e0606a"/><ellipse cx="222.5" cy="195.3" rx="3.1" ry="2.7" fill="#e0b080"/><ellipse cx="207.8" cy="197.7" rx="3.6" ry="3.1" fill="#35a080"/><ellipse cx="270" cy="192.4" rx="0.9" ry="2.9" fill="#808080"/><ellipse cx="198.4" cy="199.8" rx="2.9" ry="3.2" fill="#8a5a4a"/><ellipse cx="193.1" cy="200.8" rx="2.5" ry="2.5" fill="#7a8a35"/><ellipse cx="218.6" cy="200.6" rx="2.9" ry="2.5" fill="#5540b5"/><ellipse cx="233.7" cy="200.2" rx="3.1" ry="3.6" fill="#b07535"/><ellipse cx="241.2" cy="201.4" rx="3.4" ry="3.2" fill="#a08070"/><ellipse cx="256.8" cy="199.2" rx="2.7" ry="3.1" fill="#808a90"/><ellipse cx="206.8" cy="205.7" rx="2.2" ry="2.5" fill="#808590"/><ellipse cx="213.1" cy="206.3" rx="2.9" ry="3.1" fill="#b5cf45"/><ellipse cx="220.4" cy="206.7" rx="2.7" ry="2.5" fill="#b07535"/><ellipse cx="267.4" cy="205.5" rx="3.1" ry="3.6" fill="#b5b530"/><ellipse cx="249.8" cy="208.7" rx="3.1" ry="3.2" fill="#50506a"/><ellipse cx="203.3" cy="210.8" rx="3.6" ry="3.1" fill="#c035c0"/><ellipse cx="236.6" cy="211.6" rx="3.1" ry="2.3" fill="#d5cfa0"/><ellipse cx="260.6" cy="212.8" rx="2.7" ry="2.9" fill="#b0457a"/><ellipse cx="193.9" cy="217.1" rx="3.1" ry="2.7" fill="#5530a5"/><ellipse cx="206.6" cy="216.9" rx="2.9" ry="2.2" fill="#45b0d5"/><ellipse cx="223.9" cy="215.7" rx="2.5" ry="2.7" fill="#35a080"/><ellipse cx="234.3" cy="215.9" rx="2.9" ry="2.5" fill="#c02555"/><ellipse cx="265.1" cy="217.1" rx="4" ry="2.9" fill="#2545e0" transform="rotate(-25 265.1 217.1)"/><ellipse cx="244.1" cy="219.4" rx="2.7" ry="2.9" fill="#35b08a"/><ellipse cx="254.1" cy="220.8" rx="2.9" ry="2.3" fill="#45c5a0"/><ellipse cx="191.2" cy="224.1" rx="3.1" ry="3.2" fill="#a545d0"/><ellipse cx="208.8" cy="222.2" rx="2.9" ry="2.7" fill="#a55525"/><ellipse cx="216.8" cy="222.2" rx="2.5" ry="2.5" fill="#e0a0d0"/><ellipse cx="235.1" cy="223.6" rx="3.2" ry="2.2" fill="#c5d555" transform="rotate(-20 235.1 223.6)"/><ellipse cx="214.1" cy="227.1" rx="3.4" ry="3.1" fill="#2040d5"/><ellipse cx="246.1" cy="225.7" rx="3.1" ry="2.9" fill="#a55025"/><ellipse cx="257.6" cy="228.3" rx="3.1" ry="2.5" fill="#a08570"/><ellipse cx="240.8" cy="232" rx="2.9" ry="2.5" fill="#4095c0"/><ellipse cx="199" cy="233.2" rx="3.6" ry="2.3" fill="#a565a5"/><ellipse cx="251.5" cy="233.6" rx="2.7" ry="3.1" fill="#45a5d0"/><ellipse cx="221" cy="236.1" rx="2.9" ry="3.4" fill="#5540a5"/><ellipse cx="202.7" cy="237.9" rx="3.6" ry="2.7" fill="#b05a30"/><ellipse cx="263.7" cy="237.5" rx="2.9" ry="2.7" fill="#8a80d5"/><ellipse cx="244.3" cy="240.4" rx="2.7" ry="2" fill="#60d5e5"/><ellipse cx="268.6" cy="242.2" rx="2.2" ry="3.6" fill="#d035c0"/><ellipse cx="216.1" cy="243.6" rx="3.2" ry="2.9" fill="#6a8a45"/><ellipse cx="204.7" cy="246.1" rx="3.2" ry="2.5" fill="#b5b530"/><ellipse cx="254.5" cy="247.3" rx="2.3" ry="3.6" fill="#e0a5d0"/><ellipse cx="245.7" cy="248.7" rx="3.2" ry="3.2" fill="#a55530"/><ellipse cx="261.2" cy="248.9" rx="2.3" ry="3.2" fill="#b5b530"/><ellipse cx="222.3" cy="249.6" rx="3.1" ry="2.9" fill="#e07085"/><ellipse cx="191.2" cy="252.4" rx="2.5" ry="2.7" fill="#35a080"/><ellipse cx="220.4" cy="254.3" rx="2.7" ry="3.1" fill="#1f7a60"/><ellipse cx="232.9" cy="253.6" rx="2.9" ry="4.3" fill="#b0357a"/><ellipse cx="209.2" cy="255.9" rx="2.9" ry="3.2" fill="#b5d0cf"/><ellipse cx="264.1" cy="257.7" rx="4" ry="3.1" fill="#d5cfa0"/><ellipse cx="246.8" cy="259.4" rx="3.6" ry="2.7" fill="#a55530"/><ellipse cx="202.9" cy="260.2" rx="2.9" ry="2.7" fill="#808590"/><ellipse cx="268.4" cy="261.6" rx="2.3" ry="3.1" fill="#2040d5"/><ellipse cx="196.8" cy="264.3" rx="2.7" ry="3.6" fill="#5540a5"/><ellipse cx="257.8" cy="268.5" rx="3.1" ry="2.5" fill="#c0457a"/><ellipse cx="206.8" cy="269.4" rx="2.2" ry="1.4" fill="#606060"/><ellipse cx="215.1" cy="270.2" rx="2.2" ry="0.9" fill="#505050"/><ellipse cx="237" cy="270.2" rx="1.8" ry="0.9" fill="#404040"/></g></svg>
<div class="a" style="left:508.8px;top:40px;width:1.3px;height:451px;background:#3d434c;"></div>
<div class="a" style="left:824px;top:0px;width:1px;height:510px;background:#808285;"></div>
<svg class="a" style="left:518.8px;top:45px" width="18" height="7" viewBox="0 0 18 7"><ellipse cx="2.8" cy="3.300" rx="2.800" ry="1.700" fill="#cdcfd2"/><path d="M0.6 5.300l4.400-4" stroke="#262930" stroke-width="0.800"/><rect x="12.3" y="1.300" width="3.400" height="3.200" fill="none" stroke="#cdcfd2" stroke-width="1"/><rect x="14.3" y="3.300" width="3" height="2.600" fill="#cdcfd2"/></svg>
<div class="a" style="left:541.4px;top:48px;width:120.6px;height:1px;background:#414851;"></div>
<div class="a" style="left:667.7px;top:79.8px;width:147.5px;height:16.2px;background:#414851;border-radius:2px;"></div>
<svg class="a" style="left:800.75px;top:85.15px" width="9.7" height="5.5" viewBox="0 0 9.7 5.5"><path d="M0 0h9.7 l-4.85 5.5 z" fill="#868e93"/></svg>
<div class="a" style="left:667.7px;top:101px;width:147.5px;height:15.8px;background:#414851;border-radius:2px;"></div>
<svg class="a" style="left:800.75px;top:106.15px" width="9.7" height="5.5" viewBox="0 0 9.7 5.5"><path d="M0 0h9.7 l-4.85 5.5 z" fill="#868e93"/></svg>
<div class="a" style="left:737.8px;top:121.4px;width:67.2px;height:15.2px;background:#414851;border-radius:2px;"></div>
<div class="a" style="left:741.8px;top:128.5px;width:7.2px;height:1px;background:#9ca1a7;"></div>
<div class="a" style="left:793.7px;top:128.5px;width:7.3px;height:1px;background:#9ca1a7;"></div>
<div class="a" style="left:796.9px;top:125.3px;width:1px;height:7.4px;background:#9ca1a7;"></div>
<div class="a" style="left:520.2px;top:142px;width:12.9px;height:13px;background:#414851;border-radius:2px;"><svg width="13" height="13" viewBox="0 0 13 13" style="position:absolute;left:0;top:0"><path d="M2.600 6.600l2.600 2.600 5.200-5.800" stroke="#fff" stroke-width="1.400" fill="none"/></svg></div>
<div class="a" style="left:519.2px;top:171.7px;width:295.8px;height:92px;background:#3a4049;border-radius:2px;"></div>
<div class="a" style="left:804.8px;top:171.7px;width:10.2px;height:92px;background:#3a4049;"></div>
<div class="a" style="left:804.8px;top:181.5px;width:10.2px;height:69.1px;background:#414851;"></div>
<div class="a" style="left:805.6px;top:184.7px;width:8.8px;height:20.3px;background:#5a626c;border-radius:1px;"></div>
<svg class="a" style="left:806.8px;top:174.5px" width="6.4" height="4.2" viewBox="0 0 6.4 4.2"><path d="M0 4.200L3.200 0L6.400 4.200z" fill="#e8e9ea"/></svg>
<svg class="a" style="left:806.8px;top:256.2px" width="6.4" height="4.2" viewBox="0 0 6.4 4.2"><path d="M0 0h6.400L3.200 4.200z" fill="#e8e9ea"/></svg>
<div class="a" style="left:519.2px;top:268.6px;width:295.8px;height:15.3px;background:#414851;border-radius:2px;"></div>
<div class="a" style="left:519.2px;top:288.4px;width:295.8px;height:15.5px;background:#414851;border-radius:2px;"></div>
<div class="a" style="left:519.2px;top:308.8px;width:295.8px;height:15.3px;background:#414851;border-radius:2px;"></div>
<svg class="a" style="left:703.8px;top:96px" width="36.4" height="25.8" viewBox="0 0 36.4 25.8"><path d="M1 13L19.8 1L19.8 6.6L35.4 6.6L35.4 19.4L19.8 19.4L19.8 24.8z" fill="#22b14c"/></svg>
<svg class="a" style="left:690.5px;top:302.1px" width="38.2" height="29.5" viewBox="0 0 38.2 29.5"><path d="M1 14.8L21 1L21 7.3L37.2 7.3L37.2 21.6L21 21.6L21 28.5z" fill="#22b14c"/></svg>
<div class="a" style="left:510px;top:333.2px;width:314px;height:1.7px;background:#363b43;"></div>
<svg class="a" style="left:519px;top:340px" width="29.9" height="7" viewBox="0 0 29.9 7"><path d="M0.500 1.200l3.800 3.800M4.300 1.200l-3.800 3.800" stroke="#cdcfd2" stroke-width="1.100"/><ellipse cx="14.7" cy="3.300" rx="2.800" ry="1.700" fill="#cdcfd2"/><path d="M12.5 5.300l4.400-4" stroke="#262930" stroke-width="0.800"/><rect x="24.2" y="1.300" width="3.400" height="3.200" fill="none" stroke="#cdcfd2" stroke-width="1"/><rect x="26.2" y="3.300" width="3" height="2.600" fill="#cdcfd2"/></svg>
<div class="a" style="left:553px;top:343.2px;width:121.8px;height:1px;background:#414851;"></div>
<div class="a" style="left:517.3px;top:356.9px;width:148.6px;height:14.7px;background:#414851;border-radius:2px;"></div>
<div class="a" style="left:668px;top:356.9px;width:149.5px;height:14.7px;background:#414851;border-radius:2px;"></div>
<div class="a" style="left:517.8px;top:377px;width:288.8px;height:97.3px;background:#262930;"></div>
<div class="a" style="left:517.8px;top:377px;width:288.8px;height:20px;background:#262930;"></div>
<div class="a" style="left:517.8px;top:395.6px;width:288.8px;height:1.6px;background:#1b1d22;"></div>
<div class="a" style="left:581.1px;top:378.2px;width:1.6px;height:17.8px;background:#1b1d22;"></div>
<div class="a" style="left:651.7px;top:378.2px;width:1.6px;height:17.8px;background:#1b1d22;"></div>
<div class="a" style="left:730.5px;top:378.2px;width:1.6px;height:17.8px;background:#1b1d22;"></div>
<div class="a" style="left:803.2px;top:378.2px;width:1.6px;height:17.8px;background:#1b1d22;"></div>
<div class="a" style="left:517.8px;top:377px;width:24.6px;height:20.3px;background:#ffffff;"></div>
<div class="a" style="left:541px;top:419px;width:265.6px;height:1px;background:#202228;"></div>
<div class="a" style="left:517.8px;top:418.7px;width:23.2px;height:1.6px;background:#15171b;"></div>
<div class="a" style="left:541px;top:441.2px;width:265.6px;height:1px;background:#202228;"></div>
<div class="a" style="left:517.8px;top:440.9px;width:23.2px;height:1.6px;background:#15171b;"></div>
<div class="a" style="left:541px;top:463.7px;width:265.6px;height:1px;background:#202228;"></div>
<div class="a" style="left:517.8px;top:463.4px;width:23.2px;height:1.6px;background:#15171b;"></div>
<div class="a" style="left:540.2px;top:397px;width:1.4px;height:77.3px;background:#15171b;"></div>
<div class="a" style="left:581.2px;top:397px;width:1px;height:77.3px;background:#202228;"></div>
<div class="a" style="left:652px;top:397px;width:1px;height:77.3px;background:#202228;"></div>
<div class="a" style="left:730.8px;top:397px;width:1px;height:77.3px;background:#202228;"></div>
<div class="a" style="left:653px;top:373.500px;width:153px;height:100.200px;border:3.900px solid #22b14c"></div>
<div class="a" style="left:807.2px;top:377.6px;width:9.2px;height:96.1px;background:#262930;"></div>
<div class="a" style="left:807.2px;top:377.6px;width:9.2px;height:9.3px;background:#414851;border-radius:1px;"></div>
<svg class="a" style="left:808.6px;top:380.2px" width="6.4" height="4.2" viewBox="0 0 6.4 4.2"><path d="M0 4.200L3.200 0L6.400 4.200z" fill="#e8e9ea"/></svg>
<div class="a" style="left:807.2px;top:388.5px;width:9.2px;height:73.5px;background:#414851;"></div>
<div class="a" style="left:807.8px;top:390.2px;width:8px;height:19.2px;background:#5a626c;border-radius:1px;"></div>
<div class="a" style="left:807.2px;top:464.5px;width:9.2px;height:9.2px;background:#414851;border-radius:1px;"></div>
<svg class="a" style="left:808.6px;top:467.2px" width="6.4" height="4.2" viewBox="0 0 6.4 4.2"><path d="M0 0h6.400L3.200 4.200z" fill="#e8e9ea"/></svg>
<div class="a" style="left:517.7px;top:474.7px;width:9.8px;height:9.4px;background:#414851;border-radius:1px;"></div>
<svg class="a" style="left:520.4px;top:476.2px" width="4.2" height="6.4" viewBox="0 0 4.2 6.4"><path d="M4.200 0v6.400L0 3.200z" fill="#e8e9ea"/></svg>
<div class="a" style="left:529.5px;top:474.7px;width:266.5px;height:9.4px;background:#414851;"></div>
<div class="a" style="left:764.6px;top:475.3px;width:30.2px;height:8.2px;background:#66707c;border-radius:1px;"></div>
<div class="a" style="left:797.4px;top:474.7px;width:9.2px;height:9.4px;background:#414851;border-radius:1px;"></div>
<svg class="a" style="left:800px;top:476.2px" width="4.2" height="6.4" viewBox="0 0 4.2 6.4"><path d="M0 0v6.400L4.200 3.200z" fill="#e8e9ea"/></svg>
<svg class="a" style="left:0;top:0" width="825" height="510" viewBox="0 0 825 510" font-family="Liberation Sans, sans-serif"><text x="23" y="14.9" font-size="9.3" fill="#000" textLength="24" lengthAdjust="spacingAndGlyphs">napari</text>
<text x="7.5" y="34.7" font-size="9.8" fill="#f0f1f2" textLength="13.3" lengthAdjust="spacingAndGlyphs">File</text>
<text x="32.8" y="34.7" font-size="9.8" fill="#f0f1f2" textLength="18.7" lengthAdjust="spacingAndGlyphs">View</text>
<text x="63.5" y="34.7" font-size="9.8" fill="#f0f1f2" textLength="32.5" lengthAdjust="spacingAndGlyphs">Window</text>
<text x="108.5" y="34.7" font-size="9.8" fill="#f0f1f2" textLength="28.5" lengthAdjust="spacingAndGlyphs">Plugins</text>
<text x="149.3" y="34.7" font-size="9.8" fill="#f0f1f2" textLength="20" lengthAdjust="spacingAndGlyphs">Tools</text>
<text x="181.3" y="34.7" font-size="9.8" fill="#f0f1f2" textLength="18.2" lengthAdjust="spacingAndGlyphs">Help</text>
<svg x="118.7" y="41.6" width="66" height="12.6" overflow="hidden"><text x="0" y="11.7" font-size="11.7" fill="#5a626c" textLength="63.5" lengthAdjust="spacingAndGlyphs">layer controls</text></svg>
<text x="15.7" y="105.5" font-size="11.9" fill="#f0f1f2" textLength="24" lengthAdjust="spacingAndGlyphs">label:</text>
<text x="126.5" y="105.3" font-size="11.5" fill="#f0f1f2" textLength="6.7" lengthAdjust="spacingAndGlyphs">1</text>
<text x="15.7" y="124.8" font-size="11.9" fill="#f0f1f2" textLength="37.3" lengthAdjust="spacingAndGlyphs">opacity:</text>
<svg x="15.7" y="133.8" width="42.6" height="16.66" overflow="hidden"><text x="0" y="11.9" font-size="11.9" fill="#f0f1f2" textLength="52.8" lengthAdjust="spacingAndGlyphs">brush size:</text></svg>
<text x="15.7" y="167.5" font-size="11.9" fill="#f0f1f2" textLength="41.9" lengthAdjust="spacingAndGlyphs">blending:</text>
<text x="68.7" y="167.5" font-size="12" fill="#f0f1f2" textLength="52.3" lengthAdjust="spacingAndGlyphs">translucent</text>
<svg x="15.7" y="178" width="43" height="16.66" overflow="hidden"><text x="0" y="11.9" font-size="11.9" fill="#f0f1f2" textLength="54.3" lengthAdjust="spacingAndGlyphs">color mode:</text></svg>
<text x="68.7" y="189.7" font-size="12" fill="#f0f1f2" textLength="21.3" lengthAdjust="spacingAndGlyphs">auto</text>
<text x="15.7" y="209.8" font-size="11.9" fill="#f0f1f2" textLength="39.6" lengthAdjust="spacingAndGlyphs">contour:</text>
<text x="92.2" y="209.8" font-size="11.5" fill="#f0f1f2" textLength="7" lengthAdjust="spacingAndGlyphs">0</text>
<svg x="15.7" y="216.1" width="43" height="16.66" overflow="hidden"><text x="0" y="11.9" font-size="11.9" fill="#f0f1f2" textLength="51.3" lengthAdjust="spacingAndGlyphs">n edit dim:</text></svg>
<text x="92.2" y="227.8" font-size="11.5" fill="#f0f1f2" textLength="7" lengthAdjust="spacingAndGlyphs">2</text>
<svg x="15.7" y="233.4" width="43" height="16.66" overflow="hidden"><text x="0" y="11.9" font-size="11.9" fill="#f0f1f2" textLength="52.3" lengthAdjust="spacingAndGlyphs">contiguous:</text></svg>
<text x="15.7" y="263.5" font-size="11.9" fill="#f0f1f2" textLength="42.3" lengthAdjust="spacingAndGlyphs">preserve</text>
<text x="15.7" y="276.5" font-size="11.9" fill="#f0f1f2" textLength="29.3" lengthAdjust="spacingAndGlyphs">labels:</text>
<text x="116.8" y="263.5" font-size="11.9" fill="#f0f1f2" textLength="24.2" lengthAdjust="spacingAndGlyphs">show</text>
<text x="116.8" y="276.5" font-size="11.9" fill="#f0f1f2" textLength="42.5" lengthAdjust="spacingAndGlyphs">selected:</text>
<svg x="144.2" y="287.3" width="40" height="12.3" overflow="hidden"><text x="0" y="11.7" font-size="11.7" fill="#5a626c" textLength="38.1" lengthAdjust="spacingAndGlyphs">layer list</text></svg>
<text x="70.8" y="348.5" font-size="12" fill="#f0f1f2" textLength="72.5" lengthAdjust="spacingAndGlyphs">StarDist labels</text>
<text x="68" y="373.8" font-size="12" fill="#f0f1f2" textLength="77.6" lengthAdjust="spacingAndGlyphs">human_mitosis</text>
<text x="4.8" y="504" font-size="9.1" fill="#f0f1f2" textLength="165.2" lengthAdjust="spacingAndGlyphs">StarDist labels [416 491]: 0; [No Properties]</text>
<text x="590.4" y="504.3" font-size="9.1" fill="#f0f1f2" textLength="142.8" lengthAdjust="spacingAndGlyphs">enter paint or fill mode to edit labels</text>
<text x="772.2" y="504.3" font-size="9.1" fill="#f0f1f2" textLength="28.1" lengthAdjust="spacingAndGlyphs">activity</text>
<svg x="668.5" y="42.2" width="147" height="12.2" overflow="hidden"><text x="0" y="12" font-size="12" fill="#5a626c" textLength="145.5" lengthAdjust="spacingAndGlyphs">Dimensionality reduction (ncp)</text></svg>
<text x="522.2" y="72.7" font-size="9" fill="#f0f1f2" textLength="105.1" lengthAdjust="spacingAndGlyphs" font-weight="bold">Dimensionality reduction</text>
<text x="521.8" y="91.7" font-size="9" fill="#f0f1f2" textLength="42.2" lengthAdjust="spacingAndGlyphs">Labels layer</text>
<text x="673" y="91.8" font-size="9" fill="#f0f1f2" textLength="51.2" lengthAdjust="spacingAndGlyphs">StarDist labels</text>
<text x="521.8" y="112.7" font-size="9" fill="#f0f1f2" textLength="124.1" lengthAdjust="spacingAndGlyphs">Dimensionality Reduction Algorithm</text>
<text x="673" y="112.5" font-size="9" fill="#f0f1f2" textLength="20.9" lengthAdjust="spacingAndGlyphs">UMAP</text>
<text x="521.8" y="132.5" font-size="9" fill="#f0f1f2" textLength="74.5" lengthAdjust="spacingAndGlyphs">Number of neighbors</text>
<text x="762" y="132.2" font-size="9" fill="#f0f1f2" textLength="8.7" lengthAdjust="spacingAndGlyphs">15</text>
<text x="808" y="132.2" font-size="8.6" fill="#f0f1f2" textLength="4.5" lengthAdjust="spacingAndGlyphs" font-weight="bold">?</text>
<text x="536.9" y="151.9" font-size="9.1" fill="#f0f1f2" textLength="76.4" lengthAdjust="spacingAndGlyphs">Standardize Features</text>
<text x="521.8" y="169.2" font-size="9" fill="#f0f1f2" textLength="52.3" lengthAdjust="spacingAndGlyphs">Measurements</text>
<text x="522.7" y="181.9" font-size="9" fill="#f0f1f2" textLength="15.7" lengthAdjust="spacingAndGlyphs">area</text>
<text x="522.7" y="194.52" font-size="9" fill="#f0f1f2" textLength="39.7" lengthAdjust="spacingAndGlyphs">bbox_area</text>
<text x="522.7" y="207.14" font-size="9" fill="#f0f1f2" textLength="47.7" lengthAdjust="spacingAndGlyphs">convex_area</text>
<text x="522.7" y="219.76" font-size="9" fill="#f0f1f2" textLength="79.5" lengthAdjust="spacingAndGlyphs">equivalent_diameter</text>
<text x="522.7" y="232.38" font-size="9" fill="#f0f1f2" textLength="54" lengthAdjust="spacingAndGlyphs">max_intensity</text>
<text x="522.7" y="245" font-size="9" fill="#f0f1f2" textLength="58.9" lengthAdjust="spacingAndGlyphs">mean_intensity</text>
<text x="522.7" y="257.62" font-size="9" fill="#f0f1f2" textLength="52" lengthAdjust="spacingAndGlyphs">min_intensity</text>
<text x="626" y="279.4" font-size="9" fill="#f0f1f2" textLength="80.6" lengthAdjust="spacingAndGlyphs">Update Measurements</text>
<text x="636.9" y="299.8" font-size="9" fill="#f0f1f2" textLength="60.1" lengthAdjust="spacingAndGlyphs">Restore Defaults</text>
<text x="660" y="319.6" font-size="9" fill="#f0f1f2" textLength="13.8" lengthAdjust="spacingAndGlyphs">Run</text>
<svg x="682.3" y="336" width="133" height="12.5" overflow="hidden"><text x="0" y="12" font-size="12" fill="#5a626c" textLength="131.1" lengthAdjust="spacingAndGlyphs">Properties of StarDist labels</text></svg>
<text x="560" y="367.4" font-size="9" fill="#f0f1f2" textLength="62.2" lengthAdjust="spacingAndGlyphs">Copy to clipboard</text>
<text x="716.4" y="367.4" font-size="9" fill="#f0f1f2" textLength="50.6" lengthAdjust="spacingAndGlyphs">Save as csv...</text>
<text x="542.7" y="390.8" font-size="9.5" fill="#f0f1f2" textLength="21.3" lengthAdjust="spacingAndGlyphs">ularity</text>
<text x="608.6" y="390.8" font-size="9.5" fill="#f0f1f2" textLength="21" lengthAdjust="spacingAndGlyphs">index</text>
<text x="677.7" y="390.8" font-size="9.5" fill="#f0f1f2" textLength="33.3" lengthAdjust="spacingAndGlyphs">UMAP_0</text>
<text x="751.9" y="390.8" font-size="9.5" fill="#f0f1f2" textLength="32.7" lengthAdjust="spacingAndGlyphs">UMAP_1</text>
<text x="520.4" y="412.8" font-size="9.1" fill="#f0f1f2" textLength="3.6" lengthAdjust="spacingAndGlyphs">1</text>
<text x="584.5" y="411.7" font-size="9.1" fill="#f0f1f2" textLength="3.6" lengthAdjust="spacingAndGlyphs">1</text>
<text x="658.6" y="411.7" font-size="9.1" fill="#f0f1f2" textLength="37.8" lengthAdjust="spacingAndGlyphs">3.4689488</text>
<text x="733.6" y="411.7" font-size="9.1" fill="#f0f1f2" textLength="37.9" lengthAdjust="spacingAndGlyphs">13.265756</text>
<text x="520.4" y="435.6" font-size="9.1" fill="#f0f1f2" textLength="3.6" lengthAdjust="spacingAndGlyphs">2</text>
<text x="584.5" y="434.1" font-size="9.1" fill="#f0f1f2" textLength="3.6" lengthAdjust="spacingAndGlyphs">2</text>
<text x="658.6" y="434.1" font-size="9.1" fill="#f0f1f2" textLength="41.2" lengthAdjust="spacingAndGlyphs">-1.3702921</text>
<text x="733.6" y="434.1" font-size="9.1" fill="#f0f1f2" textLength="37.9" lengthAdjust="spacingAndGlyphs">14.229578</text>
<text x="520.4" y="458.1" font-size="9.1" fill="#f0f1f2" textLength="3.6" lengthAdjust="spacingAndGlyphs">3</text>
<text x="543.2" y="456.7" font-size="9.1" fill="#f0f1f2" textLength="34.9" lengthAdjust="spacingAndGlyphs">92906771</text>
<text x="584.5" y="456.5" font-size="9.1" fill="#f0f1f2" textLength="3.6" lengthAdjust="spacingAndGlyphs">3</text>
<text x="658.6" y="456.5" font-size="9.1" fill="#f0f1f2" textLength="37.8" lengthAdjust="spacingAndGlyphs">3.0968266</text>
<text x="733.6" y="456.5" font-size="9.1" fill="#f0f1f2" textLength="37.9" lengthAdjust="spacingAndGlyphs">14.670594</text>
<svg x="584.5" y="470" width="6" height="4.2" overflow="hidden"><text x="0" y="9" font-size="9" fill="#f0f1f2" textLength="3.6" lengthAdjust="spacingAndGlyphs">4</text></svg></svg>
</body></html>
